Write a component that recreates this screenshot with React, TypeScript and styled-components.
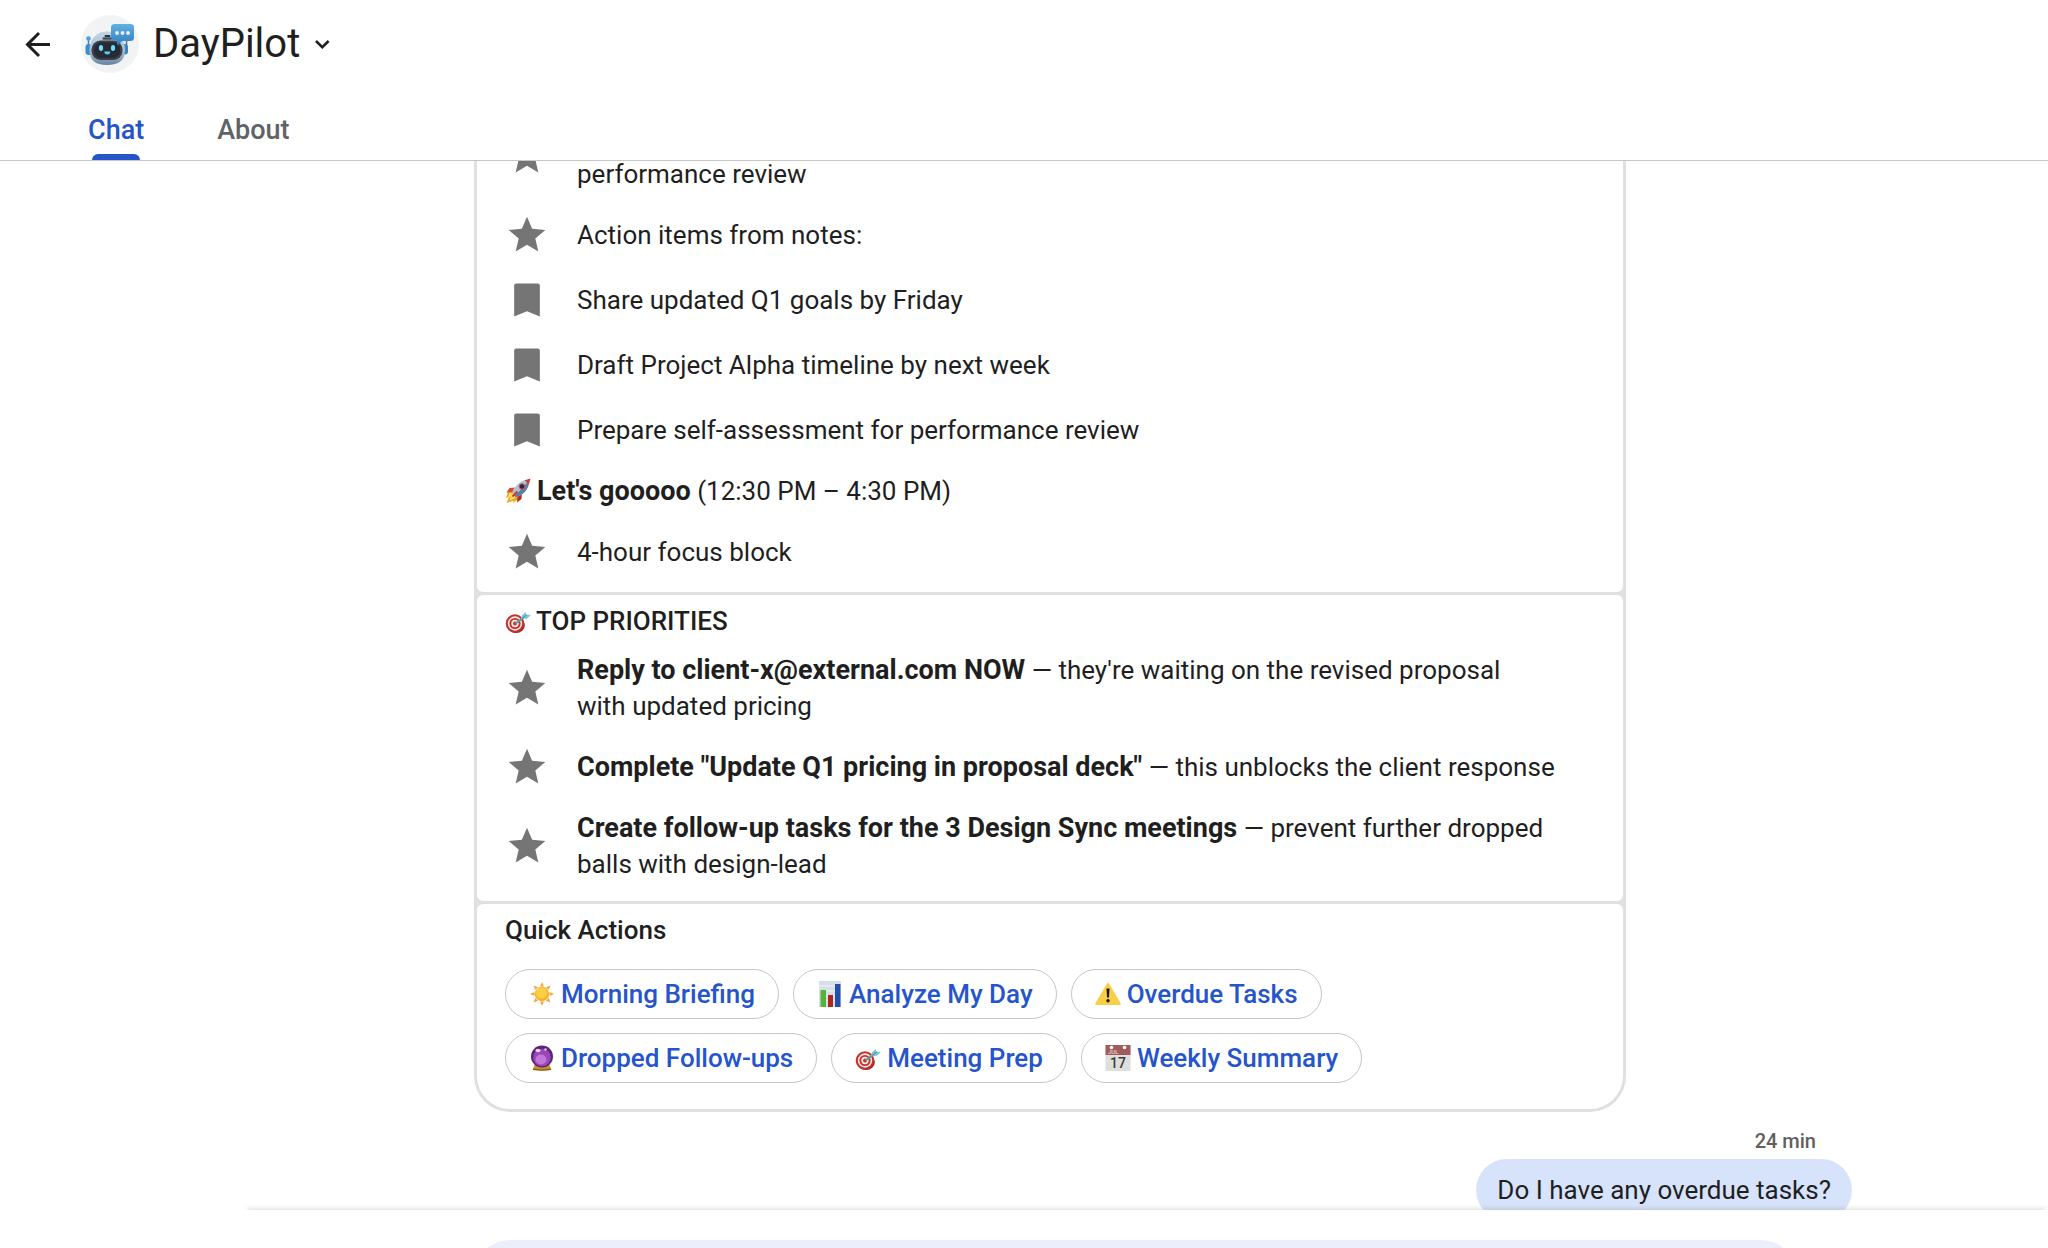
import React from "react";
import styled, { createGlobalStyle, css } from "styled-components";

const ink = "#1f1f1f";
const blue = "#2554cb";
const line = "#e0e0e0";
const fontStack = `Roboto, "Noto Sans", "Liberation Sans", sans-serif`;

const GlobalStyle = createGlobalStyle`
  *, *::before, *::after { box-sizing: border-box; }
  body { margin: 0; background: #fff; color: ${ink}; font-family: ${fontStack}; }
  button, input { font-family: inherit; }
`;

const Page = styled.div`
  display: flex;
  flex-direction: column;
  height: 100vh;
  overflow: hidden;
  font-size: 26px;
  line-height: 36px;
`;

const Header = styled.header`
  flex: none;
  display: flex;
  flex-direction: column;
  border-bottom: 1px solid #c4c7c5;
`;

const TitleRow = styled.div`
  display: flex;
  align-items: center;
  height: 88px;
  padding-left: 20px;
`;

const IconButton = styled.button`
  display: flex;
  align-items: center;
  justify-content: center;
  padding: 0;
  border: 0;
  background: none;
  color: ${ink};
  cursor: pointer;
`;

const BackButton = styled(IconButton)`
  width: 36px;
  height: 36px;
  margin-right: 25px;
`;

const MenuButton = styled(IconButton)`
  width: 36px;
  height: 36px;
  margin-left: 4px;
`;

const AppName = styled.h1`
  margin: 0 0 0 14px;
  font-size: 40px;
  line-height: 48px;
  font-weight: 400;
`;

const Tabs = styled.nav`
  display: flex;
  gap: 73px;
  height: 72px;
  padding: 0 88px;
`;

const Tab = styled.a<{ $active?: boolean }>`
  display: flex;
  flex-direction: column;
  justify-content: space-between;
  padding-top: 24px;
  font-size: 27px;
  font-weight: 500;
  color: ${(p) => (p.$active ? blue : "#5f6368")};
  text-decoration: none;
  ${(p) =>
    p.$active &&
    css`
      &::after {
        content: "";
        height: 6px;
        margin: 0 4px;
        border-radius: 6px 6px 0 0;
        background: ${blue};
      }
    `}
`;

const Feed = styled.main`
  flex: 1;
  min-height: 0;
  overflow: hidden;
  display: flex;
  flex-direction: column;
  padding: 0 196px 0 474px;
`;

const Card = styled.article`
  flex: none;
  display: flex;
  flex-direction: column;
  gap: 3px;
  width: 100%;
  max-width: 1152px;
  margin-top: -41px;
  padding: 0 3px 3px;
  border-radius: 0 0 36px 36px;
  background: ${line};
`;

const Section = styled.section<{ $first?: boolean; $last?: boolean }>`
  padding: ${(p) => (p.$first ? 0 : 8)}px 28px ${(p) => (p.$last ? 26 : p.$first ? 18 : 19)}px;
  border-radius: ${(p) => (p.$first ? "0 0 6px 6px" : p.$last ? "6px 6px 33px 33px" : "6px")};
  background: #fff;
`;

const Heading = styled.h2<{ $gap: number }>`
  display: flex;
  align-items: center;
  gap: 5px;
  margin: 0 0 ${(p) => p.$gap}px;
  font-size: 26px;
  line-height: 36px;
  font-weight: 500;
`;

const List = styled.ul`
  display: flex;
  flex-direction: column;
  gap: 21px;
  margin: 0;
  padding: 0;
  list-style: none;
`;

const Item = styled.li<{ $tall?: boolean }>`
  display: flex;
  align-items: center;
  gap: 28px;
  min-height: ${(p) => (p.$tall ? 72 : 44)}px;
  padding-right: 26px;
`;

const ItemText = styled.span<{ $end?: boolean }>`
  flex: 1;
  align-self: ${(p) => (p.$end ? "flex-end" : "center")};
`;

const EventLine = styled.p`
  display: flex;
  align-items: center;
  gap: 6px;
  margin: 21px 0;
`;

const Strong = styled.strong`
  font-size: 27px;
  font-weight: 700;
`;

const Chips = styled.div`
  display: flex;
  flex-wrap: wrap;
  gap: 14px;
  max-width: 900px;
`;

const Chip = styled.button`
  display: flex;
  align-items: center;
  gap: 6px;
  height: 50px;
  padding: 0 23px;
  border: 1px solid #c4c7c5;
  border-radius: 25px;
  background: #fff;
  color: ${blue};
  font-size: 26px;
  line-height: 36px;
  font-weight: 500;
  cursor: pointer;
`;

const Outgoing = styled.div`
  flex: none;
  display: flex;
  flex-direction: column;
  align-items: flex-end;
  gap: 4px;
  padding-top: 15px;
`;

const Time = styled.time`
  padding-right: 36px;
  font-size: 20px;
  line-height: 28px;
  font-weight: 500;
  color: #5f6060;
`;

const Bubble = styled.p`
  margin: 0;
  padding: 13px 21px;
  border-radius: 31px;
  background: #d7e3fb;
`;

const Composer = styled.form`
  flex: none;
  position: relative;
  height: 38px;
  margin-left: 244px;
  padding: 30px 251px 0 230px;
  background: #fff;
  box-shadow: 0 -5px 4px -3px rgba(60, 64, 67, 0.14);
`;

const ComposerInput = styled.input`
  display: block;
  width: 100%;
  height: 72px;
  border: 0;
  border-radius: 36px;
  padding: 0 36px;
  background: #eceffb;
  font-size: 26px;
`;

const Icon = styled.svg<{ $size: number }>`
  flex: none;
  display: block;
  width: ${(p) => p.$size}px;
  height: ${(p) => p.$size}px;
`;

const Star = () => (
  <Icon $size={44} viewBox="0 0 24 24" fill="#757575" aria-hidden>
    <path d="M12 17.27 18.18 21l-1.64-7.03L22 9.24l-7.19-.61L12 2 9.19 8.63 2 9.24l5.46 4.73L5.82 21z" />
  </Icon>
);

const Bookmark = () => (
  <Icon $size={44} viewBox="0 0 24 24" fill="#757575" aria-hidden>
    <path d="M17.8 3H6.2C5.5 3 5 3.5 5 4.1V21l7-2.9 7 2.9V4.1C19 3.5 18.500 3 17.8 3z" />
  </Icon>
);

const Avatar = () => (
  <Icon $size={58} viewBox="0 0 58 58" aria-hidden>
    <defs>
      <linearGradient id="shell" x1="0" y1="0" x2="0" y2="1">
        <stop offset="0" stopColor="#c3d5e3" />
        <stop offset=".6" stopColor="#a6bfd3" />
        <stop offset="1" stopColor="#66839f" />
      </linearGradient>
      <linearGradient id="talk" x1="0" y1="0" x2="0" y2="1">
        <stop offset="0" stopColor="#62afdf" />
        <stop offset="1" stopColor="#2f7fc0" />
      </linearGradient>
    </defs>
    <circle cx="29" cy="29" r="29" fill="#f1f3f4" />
    <path d="M7.500 24v10" stroke="#4d7ea8" strokeWidth="1.500" />
    <circle cx="7.500" cy="23.500" r="2.300" fill="#4aa0dc" />
    <rect x="4.500" y="29" width="7" height="11" rx="3" fill="#3f8ccb" />
    <path d="M45.500 24v8" stroke="#4d6f90" strokeWidth="1.500" />
    <rect x="40" y="29" width="7" height="10.500" rx="3" fill="#3a83c4" />
    <path d="M8.500 35c0-11 7-18.500 17.500-18.500S44 24 44 35c0 10-6 15-18 15S8.500 45 8.500 35z" fill="url(#shell)" />
    <rect x="23.500" y="20" width="6" height="2" rx="1" fill="#31373f" />
    <rect x="21.500" y="22.300" width="10" height="2.500" rx="1.200" fill="#4a535d" />
    <rect x="10.500" y="25.500" width="31" height="19.500" rx="9" fill="#3b3f47" />
    <rect x="13" y="27.500" width="26" height="15.500" rx="7" fill="#262b35" />
    <ellipse cx="20" cy="33" rx="2.100" ry="3" fill="#6fe0f8" />
    <ellipse cx="32" cy="33" rx="2.100" ry="3" fill="#6fe0f8" />
    <path d="M23.300 36.600h6c0 2-1.200 3-3 3s-3-1-3-3z" fill="#55d0f0" />
    <path d="M33.500 9h16a3.500 3.500 0 0 1 3.500 3.500v10a3.500 3.500 0 0 1-3.500 3.500H41l-4.500 4.500-.8-4.700c-3.500-.2-5.700-1.300-5.700-4.300v-9A3.500 3.500 0 0 1 33.500 9z" fill="url(#talk)" />
    <circle cx="36" cy="18" r="1.900" fill="#e9f0f6" />
    <circle cx="41.500" cy="18" r="1.900" fill="#e9f0f6" />
    <circle cx="47" cy="18" r="1.900" fill="#e9f0f6" />
  </Icon>
);

const Rocket = () => (
  <Icon $size={26} viewBox="0 0 26 26" aria-hidden>
    <path d="M3 13.500 1 20l3-1-2.500 6 7-2.200L8 25l6-4.500-2-6-4-3z" fill="#f5a623" />
    <path d="M4.500 15 2.500 20l3.500-1.500-1.500 4 5-2 1.500-4z" fill="#ffe169" />
    <path d="M10 9.500 4.500 10 1.500 14.500 7 14z" fill="#d8492f" />
    <path d="M17 14.500 16.500 21 12 24.500l.5-6z" fill="#b5301f" />
    <path d="M7.500 15.500C9 9 14 3 21.500 2l2.500 2.500C23.300 12 17.500 17.500 11 19z" fill="#a9c3dc" />
    <path d="M9.500 17.500C14 14 19.500 8 23 3l1 1.500C23.300 12 17.500 17.500 11 19z" fill="#5c7fa6" />
    <path d="M19.500 2.300 25.500.500 23.800 6.500C22.500 4.800 21.200 3.500 19.500 2.300z" fill="#d33a2c" />
    <circle cx="17" cy="8.500" r="2.800" fill="#26303c" stroke="#d9534a" />
    <path d="M7.500 18.500l5-5" stroke="#c93a2a" strokeWidth="2" />
  </Icon>
);

const Target = () => (
  <Icon $size={26} viewBox="0 0 26 26" aria-hidden>
    <ellipse cx="11" cy="17.500" rx="8.800" ry="7.500" fill="#8f1d1a" />
    <circle cx="10" cy="15.500" r="9.300" fill="#c9302c" />
    <circle cx="10" cy="15.500" r="7.200" fill="#f3e9e7" />
    <circle cx="10" cy="15.500" r="5.600" fill="#c9302c" />
    <circle cx="10" cy="15.500" r="3.700" fill="#f3e9e7" />
    <circle cx="10" cy="15.500" r="1.900" fill="#c9302c" />
    <path d="m10.500 15.500 9-6.500" stroke="#4f9fa8" strokeWidth="2" />
    <path d="m16 11 .8-3.600 3.900-3.400.5 2.800 4.800.3-4.200 3.700z" fill="#7cc7d2" />
    <path d="m17 10.500 5-3.700" stroke="#3f8b96" strokeWidth="1" />
  </Icon>
);

const Sun = () => (
  <Icon $size={26} viewBox="0 0 26 26" aria-hidden>
    <g fill="#f0a93a">
      {[0, 45, 90, 135, 180, 225, 270, 315].map((a) => (
        <path key={a} d="M13 1l2 4.500h-4z" transform={`rotate(${a} 13 13)`} />
      ))}
    </g>
    <circle cx="13" cy="13" r="7.200" fill="#f3b32c" />
    <circle cx="12.500" cy="12" r="5.500" fill="#fbd044" />
  </Icon>
);

const BarChart = () => (
  <Icon $size={26} viewBox="0 0 26 26" aria-hidden>
    <rect x="2" width="22" height="26" fill="#d5dfe8" />
    <path d="M2 5h22M2 10h22M2 15h22M2 20h22" stroke="#eef3f7" />
    <rect x="3.500" y="9" width="5.500" height="17" fill="#55b33b" />
    <rect x="11" y="14" width="5" height="12" fill="#b3261e" />
    <rect x="18" y="3" width="5.500" height="23" fill="#2250ac" />
  </Icon>
);

const Warning = () => (
  <Icon $size={26} viewBox="0 0 26 26" aria-hidden>
    <path d="M12 2.500q1-1.600 2 0L25.500 22q.8 2-1.200 2H1.700Q-.3 24 .5 22z" fill="#f8cf46" />
    <path d="M11.500 7.500h3L14 16.500h-2z" fill="#1d1a12" />
    <circle cx="13" cy="19.800" r="1.700" fill="#1d1a12" />
  </Icon>
);

const CrystalBall = () => (
  <Icon $size={26} viewBox="0 0 26 26" aria-hidden>
    <path d="M6 19h14l2.500 6q-9.500 1.500-19 0z" fill="#c98f2c" />
    <path d="M4 24.300q9 1.600 18 0" stroke="#7d5312" fill="none" />
    <circle cx="13" cy="11.500" r="11" fill="#5b2475" />
    <circle cx="13" cy="12.500" r="8.800" fill="#9a46b8" />
    <ellipse cx="12" cy="14.500" rx="5.500" ry="5" fill="#c077d8" />
    <ellipse cx="9" cy="5.500" rx="2.500" ry="1.700" fill="#efd5f5" />
    <circle cx="16.500" cy="4.500" r="1.200" fill="#e7c5ef" />
  </Icon>
);

const CalendarFace = styled.text`
  font: 500 14px ${fontStack};
  fill: #3c3c3c;
`;

const CalendarMonth = styled.text`
  font: 500 6px ${fontStack};
  fill: #e9cfcf;
`;

const Calendar = () => (
  <Icon $size={26} viewBox="0 0 26 26" aria-hidden>
    <rect x=".5" y="0" width="25" height="26" fill="#dedede" />
    <rect x=".5" y="0" width="25" height="10" fill="#a25b5b" />
    <circle cx="6.500" cy="2.500" r="1.800" fill="#fff" />
    <circle cx="19.500" cy="2.500" r="1.800" fill="#fff" />
    <CalendarMonth x="3" y="9">JUL</CalendarMonth>
    <CalendarFace x="13" y="23" textAnchor="middle">17</CalendarFace>
  </Icon>
);

const notes = [
  "Share updated Q1 goals by Friday",
  "Draft Project Alpha timeline by next week",
  "Prepare self-assessment for performance review",
];

const priorities = [
  { task: "Reply to client-x@external.com NOW", why: "they're waiting on the revised proposal with\u00a0updated pricing" },
  { task: 'Complete "Update Q1 pricing in proposal deck"', why: "this unblocks the client response" },
  { task: "Create follow-up tasks for the 3 Design Sync meetings", why: "prevent further dropped balls\u00a0with design-lead" },
];

const actions = [
  { label: "Morning Briefing", Glyph: Sun },
  { label: "Analyze My Day", Glyph: BarChart },
  { label: "Overdue Tasks", Glyph: Warning },
  { label: "Dropped Follow-ups", Glyph: CrystalBall },
  { label: "Meeting Prep", Glyph: Target },
  { label: "Weekly Summary", Glyph: Calendar },
];

export default function App() {
  return (
    <Page>
      <GlobalStyle />
      <Header>
        <TitleRow>
          <BackButton type="button" aria-label="Back">
            <Icon $size={36} viewBox="0 0 36 36" fill="none" stroke="currentColor" strokeWidth="3" aria-hidden>
              <path d="M30 18.500H8M19 7 7.500 18.500 19 30" />
            </Icon>
          </BackButton>
          <Avatar />
          <AppName>DayPilot</AppName>
          <MenuButton type="button" aria-label="App menu">
            <Icon $size={36} viewBox="0 0 36 36" fill="none" stroke="currentColor" strokeWidth="2.600" aria-hidden>
              <path d="m12 15 6.300 6.200 6.300-6.200" />
            </Icon>
          </MenuButton>
        </TitleRow>
        <Tabs>
          <Tab href="#chat" $active aria-current="page">Chat</Tab>
          <Tab href="#about">About</Tab>
        </Tabs>
      </Header>

      <Feed>
        <Card>
          <Section $first>
            <List>
              <Item $tall>
                <Star />
                <ItemText $end>performance review</ItemText>
              </Item>
              <Item>
                <Star />
                <ItemText>Action items from notes:</ItemText>
              </Item>
              {notes.map((note) => (
                <Item key={note}>
                  <Bookmark />
                  <ItemText>{note}</ItemText>
                </Item>
              ))}
            </List>
            <EventLine>
              <Rocket />
              <span>
                <Strong>Let's gooooo</Strong> (12:30 PM – 4:30 PM)
              </span>
            </EventLine>
            <List>
              <Item>
                <Star />
                <ItemText>4-hour focus block</ItemText>
              </Item>
            </List>
          </Section>

          <Section>
            <Heading $gap={13}>
              <Target />
              TOP PRIORITIES
            </Heading>
            <List>
              {priorities.map(({ task, why }) => (
                <Item key={task}>
                  <Star />
                  <ItemText>
                    <Strong>{task}</Strong> — {why}
                  </ItemText>
                </Item>
              ))}
            </List>
          </Section>

          <Section $last>
            <Heading $gap={21}>Quick Actions</Heading>
            <Chips>
              {actions.map(({ label, Glyph }) => (
                <Chip key={label} type="button">
                  <Glyph />
                  {label}
                </Chip>
              ))}
            </Chips>
          </Section>
        </Card>

        <Outgoing>
          <Time>24 min</Time>
          <Bubble>Do I have any overdue tasks?</Bubble>
        </Outgoing>
      </Feed>

      <Composer>
        <ComposerInput type="text" aria-label="Message" />
      </Composer>
    </Page>
  );
}
